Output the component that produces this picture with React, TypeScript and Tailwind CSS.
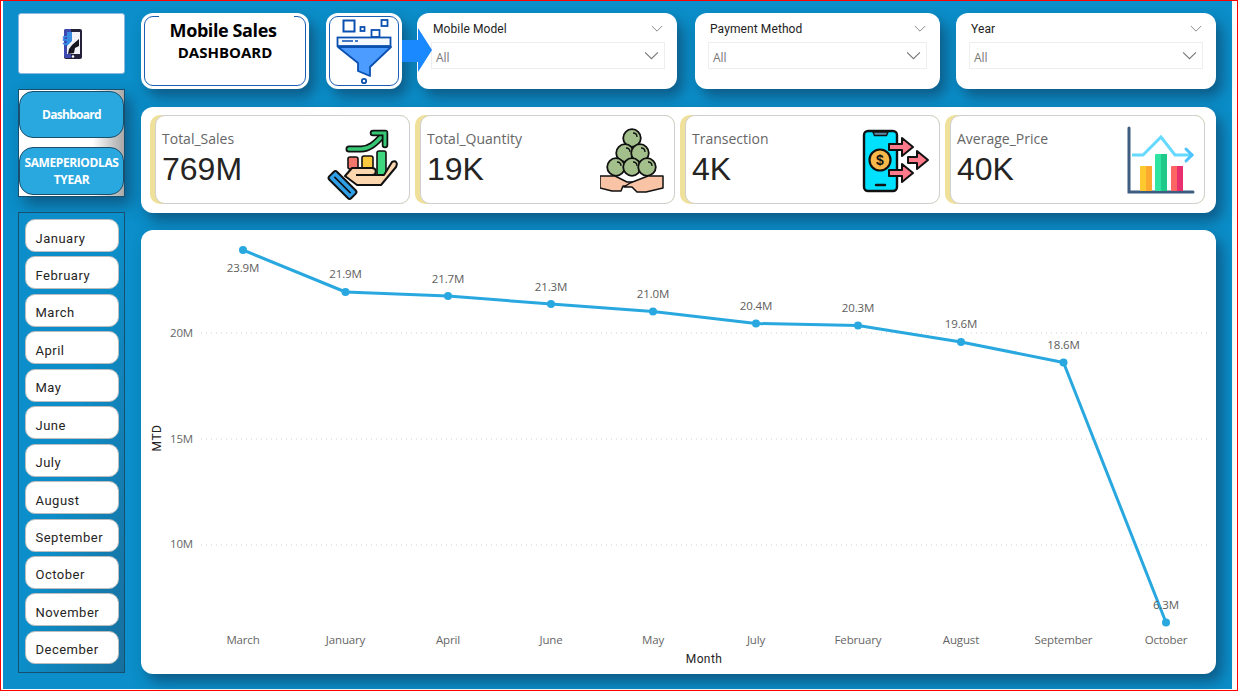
import React from 'react';

const months = ['January', 'February', 'March', 'April', 'May', 'June', 'July', 'August', 'September', 'October', 'November', 'December'];

const points = [
  { x: 102, y: 20, month: 'March', label: '23.9M', ly: 42 },
  { x: 204.5, y: 62, month: 'January', label: '21.9M', ly: 48 },
  { x: 307, y: 66, month: 'April', label: '21.7M', ly: 53 },
  { x: 410, y: 74, month: 'June', label: '21.3M', ly: 61 },
  { x: 512, y: 81.5, month: 'May', label: '21.0M', ly: 68 },
  { x: 615, y: 93.5, month: 'July', label: '20.4M', ly: 80 },
  { x: 717, y: 95.5, month: 'February', label: '20.3M', ly: 82 },
  { x: 820, y: 112, month: 'August', label: '19.6M', ly: 98 },
  { x: 922.5, y: 132.5, month: 'September', label: '18.6M', ly: 119 },
  { x: 1025, y: 392.5, month: 'October', label: '6.3M', ly: 379 },
];

const grid = [
  { y: 103, ly: 107, label: '20M' },
  { y: 209, ly: 213, label: '15M' },
  { y: 315, ly: 318, label: '10M' },
];

const din = "font-['Roboto',sans-serif]";
const segoe = "font-['Open_Sans',sans-serif]";
const cardShadow = 'shadow-[6px_8px_14px_rgba(15,50,80,0.55)]';

function Chevron({ size }: { size: number }) {
  return (
    <svg width={size} height={size * 0.6} viewBox="0 0 14 8" fill="none" stroke="#777" strokeWidth="1">
      <path d="M1 1l6 6 6-6" />
    </svg>
  );
}

function Slicer({ title, width, inputLeft, inputWidth }: { title: string; width: string; inputLeft: string; inputWidth: string }) {
  return (
    <div className={`${width} h-[76px] shrink-0 bg-white rounded-xl ${cardShadow} pt-[9px]`}>
      <div className={`flex items-center justify-between ${inputLeft} pr-[14px] h-[14px]`}>
        <span className={`${din} text-[12px] text-[#222] pl-[2px] tracking-[0.1px]`}>{title}</span>
        <Chevron size={12} />
      </div>
      <div className={`${inputLeft} mt-[6px]`}>
        <div className={`${inputWidth} h-[27px] border border-[#eeeeee] flex items-center justify-between pl-[4px] pr-[5px]`}>
          <span className={`${segoe} text-[12px] text-[#777] pt-[5px]`}>All</span>
          <Chevron size={15} />
        </div>
      </div>
    </div>
  );
}

function HandIcon() {
  return (
    <svg width="72" height="74" viewBox="326 128 72 74">
      <path d="M349 149h12c8 0 14-5 22-14" fill="none" stroke="#111" strokeWidth="7" strokeLinecap="round" />
      <path d="M349 149h12c8 0 14-5 22-14" fill="none" stroke="#35c774" strokeWidth="3.5" strokeLinecap="round" />
      <path d="M373 133h12v12" fill="none" stroke="#111" strokeWidth="6.5" strokeLinejoin="round" strokeLinecap="round" />
      <path d="M373 133h12v12" fill="none" stroke="#35c774" strokeWidth="3" strokeLinecap="round" />
      <rect x="348" y="157" width="10" height="12" rx="2" fill="#f2766b" stroke="#111" strokeWidth="1.6" />
      <rect x="362" y="156" width="11" height="13" rx="2" fill="#fbc93f" stroke="#111" strokeWidth="1.6" />
      <rect x="377" y="151" width="9" height="24" rx="2" fill="#3ed67e" stroke="#111" strokeWidth="1.6" />
      <path d="M345 176l7-8h20c5 0 5 7 0 7h12l8-13c4-2 6 1 4 5l-15 18h-24z" fill="#fcd6ae" stroke="#111" strokeWidth="2" strokeLinejoin="round" />
      <path d="M356 175h18" stroke="#111" strokeWidth="2" />
      <g transform="rotate(45 342.500 185)">
        <rect x="327" y="179.500" width="31" height="11" rx="2.500" fill="#2f9fe8" stroke="#111" strokeWidth="2" />
        <path d="M331 185h23" stroke="#111" strokeWidth="1.600" />
      </g>
    </svg>
  );
}

function BallsIcon() {
  const balls = [
    [632, 138],
    [625, 153],
    [640, 153],
    [616, 167],
    [632, 167],
    [647, 167],
  ];
  return (
    <svg width="64" height="66" viewBox="600 128 64 66">
      {balls.map(([cx, cy], i) => (
        <g key={i}>
          <circle cx={cx} cy={cy} r="8.800" fill="#a3bf8c" stroke="#111" strokeWidth="1.800" />
          <path d={`M${cx + 1} ${cy - 5}c3 0 4 2 4 4`} fill="none" stroke="#111" strokeWidth="1.300" />
        </g>
      ))}
      <path d="M600 176h15l12 6h6l-6 4h-4l-2 5h-9l-12-3z" fill="#f9c4a5" stroke="#111" strokeWidth="1.500" strokeLinejoin="round" />
      <path d="M663 176h-15l-18 7-6 4h8l5 5h9l17-4z" fill="#f9c4a5" stroke="#111" strokeWidth="1.500" strokeLinejoin="round" />
    </svg>
  );
}

function PhoneMoneyIcon() {
  const arrow = (x: number, y: number, tail: number) => `M${x} ${y - 3}h${tail}v-6l11 9-11 9v-6h-${tail}z`;
  return (
    <svg width="68" height="64" viewBox="862 129 68 64">
      <rect x="864" y="131" width="33" height="60" rx="4" fill="#00e0ff" stroke="#111" strokeWidth="2.400" />
      <path d="M873 132h15l-1.500 3.500h-12z" fill="#5c8aa8" stroke="#111" strokeWidth="1.400" />
      <path d="M876 185h9" stroke="#111" strokeWidth="2.400" strokeLinecap="round" />
      <path d={arrow(889, 147, 13)} fill="#ff7a8a" stroke="#111" strokeWidth="2" strokeLinejoin="round" />
      <path d={arrow(889, 173, 13)} fill="#ff7a8a" stroke="#111" strokeWidth="2" strokeLinejoin="round" />
      <path d={arrow(908, 160, 9)} fill="#ff7a8a" stroke="#111" strokeWidth="2" strokeLinejoin="round" />
      <circle cx="880" cy="160" r="10.500" fill="#f9b84a" stroke="#111" strokeWidth="2.200" />
      <text x="880" y="165" textAnchor="middle" fontSize="14" fontWeight="700" fontFamily="Liberation Sans, sans-serif" fill="#111">$</text>
    </svg>
  );
}

function GrowthIcon() {
  return (
    <svg width="70" height="68" viewBox="1126 126 70 68">
      <path d="M1129 128v64h64" fill="none" stroke="#3f5d80" strokeWidth="3" strokeLinecap="round" />
      <rect x="1140" y="166" width="12" height="25" rx="1" fill="#fdc92f" />
      <rect x="1146" y="166" width="6" height="25" fill="#fda92f" />
      <rect x="1155" y="154" width="12" height="37" rx="1" fill="#2fe3a0" />
      <rect x="1161" y="154" width="6" height="37" fill="#1fc98a" />
      <rect x="1171" y="166" width="12" height="25" rx="1" fill="#fd6464" />
      <rect x="1177" y="166" width="6" height="25" fill="#e8306e" />
      <path d="M1132 155h11l18-18 14 18h18" fill="none" stroke="#66d9ff" strokeWidth="3" />
      <path d="M1186 149l6 6-6 6" fill="none" stroke="#4cc3ff" strokeWidth="3" strokeLinecap="round" />
    </svg>
  );
}

function KpiCard({ label, value, icon, iconClass }: { label: string; value: string; icon: React.ReactNode; iconClass: string }) {
  return (
    <div className="w-[260px] h-[89px] shrink-0 flex rounded-[10px] bg-[#efe09a] pl-[5px]">
      <div className="flex-1 flex bg-white rounded-[10px] border border-[#cfcfcf] pl-[6px]">
        <div className="flex-1 pt-[14px]">
          <div className={`${segoe} text-[14px] leading-[18px] text-[#666]`}>{label}</div>
          <div className="font-['Liberation_Sans',sans-serif] text-[32px] leading-[36px] text-[#252423] mt-[3px]">{value}</div>
        </div>
        <div className={iconClass}>{icon}</div>
      </div>
    </div>
  );
}

function FunnelIcon() {
  return (
    <svg width="64" height="70" viewBox="332 16 64 70">
      <rect x="343.500" y="20.500" width="11" height="11" fill="none" stroke="#0a50b0" strokeWidth="2" />
      <rect x="360.500" y="27" width="4" height="4" fill="none" stroke="#0a50b0" strokeWidth="1.800" />
      <rect x="371.500" y="30" width="8" height="7" fill="none" stroke="#0a50b0" strokeWidth="1.800" />
      <rect x="381.500" y="20" width="6" height="6" fill="none" stroke="#0a50b0" strokeWidth="1.800" />
      <path d="M338 47h53l-21 20v9l-12-5v-8z" fill="#4c9bff" stroke="#0a50b0" strokeWidth="1.800" strokeLinejoin="round" />
      <rect x="337.500" y="37.500" width="53" height="8.500" fill="#f4f8ff" stroke="#0a50b0" strokeWidth="1.800" />
      <path d="M342 41h11M355 41h3" stroke="#0a50b0" strokeWidth="1.300" />
      <circle cx="364" cy="81" r="2.200" fill="none" stroke="#0a50b0" strokeWidth="1.800" />
    </svg>
  );
}

function PhoneLogo() {
  return (
    <svg width="22" height="32" viewBox="0 0 22 32">
      <rect x="3" y="1" width="18" height="30" rx="2" fill="#23203a" />
      <path d="M3 3c0-1 1-2 2-2h5v29H5c-1 0-2-1-2-2z" fill="#3d48b0" />
      <rect x="6" y="4" width="13" height="22" fill="#f2f2f8" />
      <path d="M6 4h5v9l-5 5z" fill="#3a8ae0" />
      <path d="M11 17l7-6v7l-4 2-1 5-6 1 1-5z" fill="#17151f" />
      <text x="1" y="17" fontSize="13" fontWeight="700" fontFamily="Liberation Sans, sans-serif" fill="#2f8fe8">5</text>
      <circle cx="12" cy="28.500" r="1.300" fill="#fff" />
    </svg>
  );
}

function LineChart() {
  return (
    <svg width="1075" height="444" viewBox="0 0 1075 444">
      {grid.map((g) => (
        <g key={g.y}>
          <path d={`M60 ${g.y}H1068`} stroke="#cfcfcf" strokeWidth="1" strokeDasharray="1 4" />
          <text x="52" y={g.ly} textAnchor="end" fontSize="11.5" letterSpacing="-0.15" fontFamily="Open Sans, sans-serif" fill="#666">{g.label}</text>
        </g>
      ))}
      <polyline points={points.map((p) => `${p.x},${p.y}`).join(' ')} fill="none" stroke="#29a8e0" strokeWidth="3" strokeLinejoin="round" />
      {points.map((p) => (
        <circle key={p.month} cx={p.x} cy={p.y} r="4" fill="#29a8e0" />
      ))}
      {points.map((p) => (
        <text key={p.month} x={p.x} y={p.ly} textAnchor="middle" fontSize="11.5" letterSpacing="-0.15" fontFamily="Open Sans, sans-serif" fill="#605e5c">{p.label}</text>
      ))}
      {points.map((p) => (
        <text key={p.month} x={p.x} y="414" textAnchor="middle" fontSize="11.5" letterSpacing="-0.15" fontFamily="Open Sans, sans-serif" fill="#666">{p.month}</text>
      ))}
      <text transform="translate(20 208) rotate(-90)" textAnchor="middle" fontSize="12" letterSpacing="0.5" fontFamily="Roboto, sans-serif" fill="#252423">MTD</text>
      <text x="563" y="433" textAnchor="middle" fontSize="12" fontFamily="Roboto, sans-serif" letterSpacing="0.4" fill="#252423">Month</text>
    </svg>
  );
}

export default function App() {
  return (
    <div className="w-[1238px] h-[691px] flex border border-[#ff0000] bg-white pl-[2px] pr-[5px] pb-[1px] overflow-hidden">
      <div className="flex-1 flex bg-[#0b8ec9] pl-[15px] pt-[12px]">
        <div className="w-[107px] shrink-0 flex flex-col gap-[15px]">
          <div className="h-[61px] bg-white border border-[#8fb8e0] rounded-[3px] flex items-center justify-center">
            <PhoneLogo />
          </div>
          <div className={`h-[108px] border border-[#17506e] bg-gradient-to-r from-white via-white via-70% to-[#a8a8a8] flex flex-col justify-between py-[1px] ${cardShadow}`}>
            <div className="h-[47px] bg-[#29a8e0] border border-[#1d4f6b] rounded-[14px] flex items-center justify-center">
              <span className={`${segoe} text-[12px] font-bold text-white tracking-[-0.7px]`}>Dashboard</span>
            </div>
            <div className="h-[48px] bg-[#29a8e0] border border-[#1d4f6b] rounded-[14px] flex items-center justify-center text-center">
              <span className={`${segoe} text-[12px] leading-[17px] font-bold text-white tracking-[-0.4px]`}>
                SAMEPERIODLAS
                <br />
                TYEAR
              </span>
            </div>
          </div>
          <div className="h-[461px] border border-[#17506e] bg-gradient-to-br from-[#0b8ec9] via-[#0b8ec9] to-[#17709f] flex flex-col gap-[4.450px] pl-[6px] pr-[5px] pt-[6px]">
            {months.map((m) => (
              <div key={m} className="h-[33px] shrink-0 bg-white border-[1.5px] border-[#bdbdbd] rounded-[10px] pl-[9.500px] pt-[10.500px]">
                <span className={`${din} block text-[13px] leading-[16px] tracking-[0.5px] text-[#252423]`}>{m}</span>
              </div>
            ))}
          </div>
        </div>

        <div className="w-[1075px] shrink-0 ml-[16px] flex flex-col">
          <div className="relative h-[76px] flex">
            <div className={`w-[168px] shrink-0 bg-white rounded-xl p-[3px] ${cardShadow}`}>
              <div className="relative h-full rounded-[9px] border border-[#1a5fb4] flex flex-col items-center pt-[1px] pr-[4px]">
                <div className="absolute -top-[1px] left-[14px] right-[11px] h-[2px] bg-white" />
                <span className={`${segoe} text-[18px] leading-[24px] font-bold text-black tracking-[-0.4px]`}>Mobile Sales</span>
                <span className={`${segoe} text-[15px] leading-[20px] font-bold text-black pl-[4px]`}>DASHBOARD</span>
              </div>
            </div>
            <div className={`w-[76px] shrink-0 ml-[17px] bg-white rounded-xl p-[3px] ${cardShadow}`}>
              <div className="h-full rounded-[9px] border border-[#1a5fb4] flex items-center justify-center">
                <FunnelIcon />
              </div>
            </div>
            <div className="ml-[15px]">
              <Slicer title="Mobile Model" width="w-[260px]" inputLeft="pl-[14px]" inputWidth="w-[234px]" />
            </div>
            <div className="ml-[18px]">
              <Slicer title="Payment Method" width="w-[245px]" inputLeft="pl-[13px]" inputWidth="w-[219px]" />
            </div>
            <div className="ml-[16px]">
              <Slicer title="Year" width="w-[260px]" inputLeft="pl-[13px]" inputWidth="w-[234px]" />
            </div>
            <svg className="absolute left-[261px] top-[14px]" width="31" height="46" viewBox="0 0 31 46">
              <path d="M0 13h16V1l14 22-14 22V35H0z" fill="#1a88ff" />
            </svg>
          </div>

          <div className={`mt-[18px] h-[106px] bg-white rounded-xl flex gap-[5px] pl-[9px] pt-[8px] ${cardShadow}`}>
            <KpiCard label="Total_Sales" value="769M" icon={<HandIcon />} iconClass="pt-[12px] pr-[11px]" />
            <KpiCard label="Total_Quantity" value="19K" icon={<BallsIcon />} iconClass="pt-[12px] pr-[10px]" />
            <KpiCard label="Transection" value="4K" icon={<PhoneMoneyIcon />} iconClass="pt-[13px] pr-[9px]" />
            <KpiCard label="Average_Price" value="40K" icon={<GrowthIcon />} iconClass="pt-[10px] pr-[8px]" />
          </div>

          <div className={`mt-[17px] h-[444px] bg-white rounded-xl ${cardShadow}`}>
            <LineChart />
          </div>
        </div>
      </div>
    </div>
  );
}
